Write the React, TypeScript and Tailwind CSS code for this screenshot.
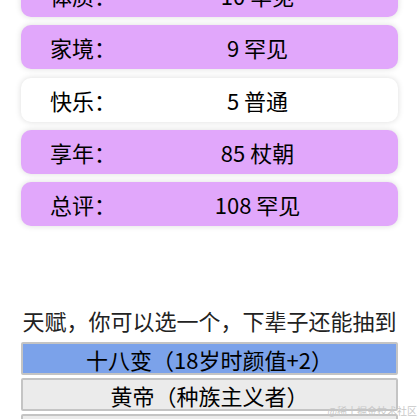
import React from "react";

const rows = [
  { label: "体质：", value: "10 罕见", rare: true },
  { label: "家境：", value: "9 罕见", rare: true },
  { label: "快乐：", value: "5 普通", rare: false },
  { label: "享年：", value: "85 杖朝", rare: true },
  { label: "总评：", value: "108 罕见", rare: true },
];

const talents = ["十八变（18岁时颜值+2）", "黄帝（种族主义者）", "天赋异禀（智力+2）"];

export default function App() {
  return (
    <div
      className="relative w-[419px] h-[419px] overflow-hidden bg-white text-black"
      style={{ fontFamily: '"Noto Sans CJK SC", "Noto Sans", sans-serif' }}
    >
      <div className="mt-[-27px] flex flex-col gap-[8.3px] px-[21px]">
        {rows.map((r) => (
          <div
            key={r.label}
            className={`flex h-[44px] items-center rounded-[10px] shadow-[0_0_6px_rgba(0,0,0,0.14)] ${
              r.rare ? "bg-[#e1a7fb]" : "bg-white"
            }`}
          >
            <div className="w-[96px] shrink-0 pl-[29px] text-[22px] leading-none whitespace-nowrap">{r.label}</div>
            <div className="flex-1 text-center text-[22px] leading-none">{r.value}</div>
          </div>
        ))}
      </div>
      <div className="mt-[78px] h-[33px] text-center text-[22px] leading-[33px] text-[#222]">
        天赋，你可以选一个，下辈子还能抽到
      </div>
      <div className="mt-[5px] flex flex-col gap-[3px] px-[21px]">
        {talents.map((t, i) => (
          <div
            key={t}
            className={`flex h-[33px] items-center justify-center rounded-[2px] border-2 border-[#c4c4c4] text-[22px] leading-none ${
              i === 0 ? "bg-[#7ba2ea]" : "bg-[#ebebeb]"
            }`}
          >
            {t}
          </div>
        ))}
      </div>
      <div className="absolute right-[2px] bottom-[3px] text-[10px] leading-none text-[#c8c8c8]">
        @稀土掘金技术社区
      </div>
    </div>
  );
}
